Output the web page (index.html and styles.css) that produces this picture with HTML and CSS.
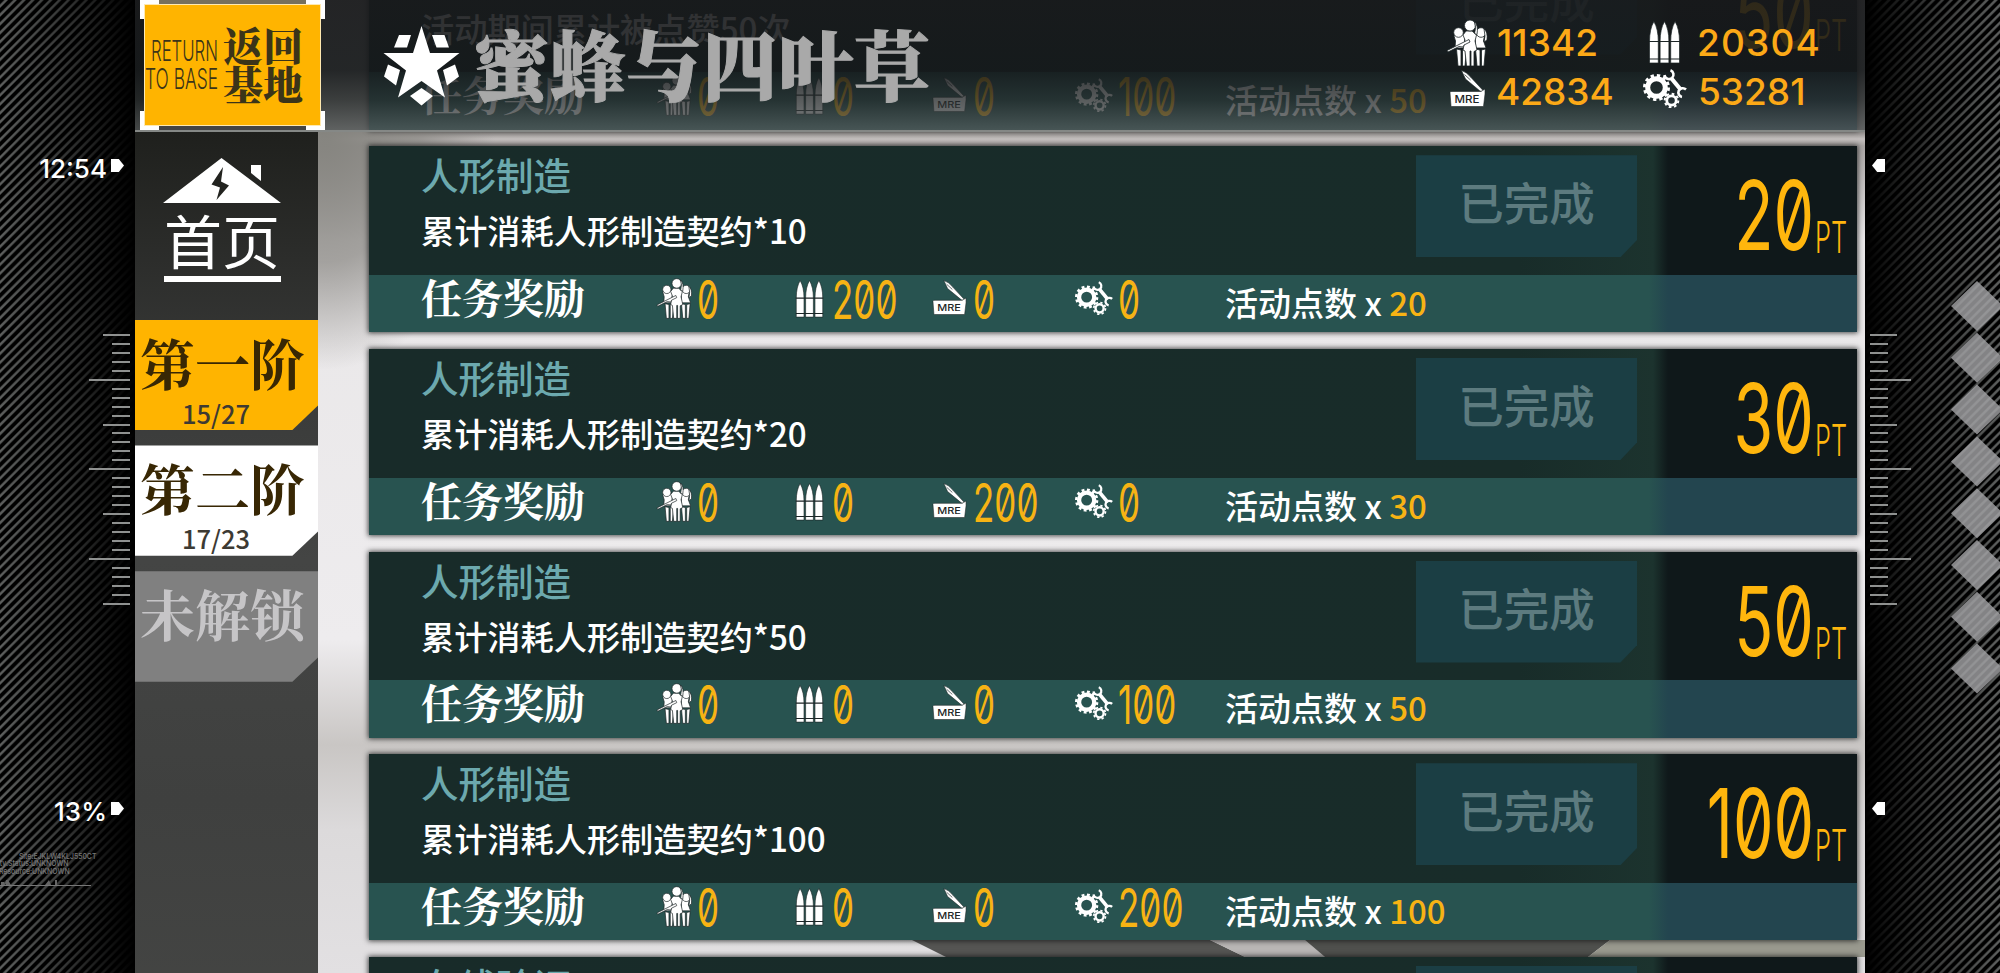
FILE: index.html
```
<!DOCTYPE html>
<html lang="zh-CN">
<head>
<meta charset="utf-8">
<title>蜜蜂与四叶草</title>
<link rel="stylesheet" href="styles.css">
</head>
<body>
<svg class="sprites" aria-hidden="true">
  <symbol id="i-doll" viewBox="0 0 44 46">
    <g fill="#fff" stroke="#1c2526" stroke-width=".8">
      <path d="M9 28h12l-2.500-7 1-6-4-2.500h-5L8 16l1.500 5z"/>
      <path d="M10.500 29l1.500 17h3V30zM16.500 30v16h2.500l1.500-17z"/>
      <circle cx="12.500" cy="12.500" r="4.800"/>
      <path d="M29 28h11l-2.500-7 1-6-4-2.500h-4L28 16l1.500 5z"/>
      <path d="M29.500 29l1.500 17h3V30zM35.500 30v16h2.500l1.500-17z"/>
      <circle cx="35" cy="12.500" r="4.800"/>
      <path d="M38 9q4 3 3 11l-3 2q2-6 0-13z"/>
      <path d="M17 30l2-10-2-5 3-4h6l4.500 4-1.500 6 2 9-3 1.500V46h-3V31h-1v15h-3.500L19 31z"/>
      <circle cx="24" cy="5.500" r="5.500"/>
      <path d="M28.500 1.500q4 4 2.500 13l-2.500-1q2-6 0-12z"/>
      <path d="M1 30.500l22-11 1 2.500-6 3-1 2-4-.5L2 32z"/>
    </g>
  </symbol>
  <symbol id="i-ammo" viewBox="0 0 31 43">
    <g fill="#fff" stroke="#1c2526" stroke-width=".7">
      <path d="M.5 42V20.500Q.5 8 4.900.5 9.300 8 9.300 20.500V42z"/>
      <path d="M11.100 42V20.500Q11.100 8 15.500.5 19.900 8 19.900 20.500V42z"/>
      <path d="M21.700 42V20.500Q21.700 8 26.100.5 30.500 8 30.500 20.500V42z"/>
    </g>
    <path d="M0 20.500h31M0 38h31" stroke="#1c2526" stroke-width="1.200"/>
  </symbol>
  <symbol id="i-mre" viewBox="0 0 37 37">
    <g fill="#fff" stroke="#1c2526" stroke-width=".6">
      <path d="M12.500.5q5 1.500 9.500 7L35.500 22l-4.500-1L16.500 9z"/>
      <path d="M1 22.500l1-1h30l4-2.500v5l-1.500 12.500h-32L2 36z"/>
    </g>
    <path d="M15.500 4.500l6 5.500" stroke="#1c2526" stroke-width=".7"/>
    <text x="5.500" y="32.700" textLength="25" lengthAdjust="spacingAndGlyphs" font-size="9.800" fill="#1c2526" class="mre">MRE</text>
  </symbol>
  <symbol id="i-part" viewBox="0 0 44 39">
    <g fill="none" stroke="#fff">
      <circle cx="13.500" cy="18.500" r="8.800" stroke-width="5"/>
      <circle cx="13.500" cy="18.500" r="12" stroke-width="3" stroke-dasharray="3.300 2.983"/>
      <circle cx="28.500" cy="31.500" r="4.700" stroke-width="2.800"/>
      <circle cx="28.500" cy="31.500" r="6.800" stroke-width="2" stroke-dasharray="2.670 2.670"/>
      <path d="M28.500 9.500L38 21" stroke-width="4.200"/>
      <path d="M21.500 6a4.600 4.600 0 0 0 7.500 3 4.600 4.600 0 0 0-1.500-7.700" stroke-width="2.600"/>
      <path d="M43 20.500a4.600 4.600 0 0 0-7.300 1.300 4.600 4.600 0 0 0 3.300 6.200" stroke-width="2.600"/>
    </g>
  </symbol>
</svg>

<div class="screen">
  <aside class="rail rail-left">
    <div class="status">12:54<i class="flag"></i></div>
    <div class="ticks"></div>
    <div class="status battery">13%<i class="flag"></i></div>
    <div class="site">
      <p>Site:EJKLW4KLJ550CT</p>
      <p class="pull-a">ity.Status:UNKNOWN</p>
      <p class="pull-b">Resource:UNKNOWN</p>
      <svg width="91" height="10" viewBox="0 0 91 10"><path d="M0 9.500h91" stroke="#777"/><path d="M1 9V6h3v3zM6 9V4h2l3 5zM45 9l4-5 2 5zM55 4h2v5h-2z" fill="#666"/></svg>
    </div>
  </aside>

  <main class="stage">
    <header class="top">
      <a class="back">
        <svg width="78" height="60" viewBox="0 0 78 60">
          <text x="6" y="23" textLength="67" lengthAdjust="spacingAndGlyphs">RETURN</text>
          <text x="0" y="51" textLength="73" lengthAdjust="spacingAndGlyphs">TO BASE</text>
        </svg>
        <span class="back-cn">返回<br>基地</span>
        <i class="c tl"></i><i class="c tr"></i><i class="c bl"></i><i class="c br"></i>
      </a>
      <svg class="star" width="78" height="82" viewBox="0 0 78 82" fill="#fff">
        <path d="M38.500 1L47 28h29.500L54 45.500l8 27-23.500-16.500-23.500 16.500 8-27L.5 28H30z"/>
        <path d="M16 10h12L24 22.500H11zM49 10h12.500L66 22.500H53.500zM5 39.500l12 5.500-4 15.500-12-9zM72 39.500L60 45l4 15.500 12-9zM38.500 63L50 71l-11.500 9.500L27 71z"/>
      </svg>
      <h1>蜜蜂与四叶草</h1>
      <div class="wallet">
        <div class="res"><svg class="w-doll"><use href="#i-doll"/></svg><b>11342</b></div>
        <div class="res"><svg class="w-ammo"><use href="#i-ammo"/></svg><b class="wide">20304</b></div>
        <div class="res"><svg class="w-mre"><use href="#i-mre"/></svg><b>42834</b></div>
        <div class="res"><svg class="w-part"><use href="#i-part"/></svg><b>53281</b></div>
      </div>
    </header>

    <nav class="side">
      <a class="home">
        <svg width="118" height="46" viewBox="0 0 118 46">
          <path fill="#fff" d="M58.500 0L118 45H0zM88 7h10v16L88 15z"/>
          <path fill="#22231f" d="M60 9L48.500 26.500l8.500 3-3.500 12.500L66 27.500l-8-4z"/>
        </svg>
        <span>首页</span>
      </a>
      <a class="tab on"><b>第一阶</b><small>15/27</small></a>
      <a class="tab"><b>第二阶</b><small>17/23</small></a>
      <a class="tab locked"><b>未解锁</b></a>
    </nav>

    <svg class="scenery" width="955" height="17" viewBox="0 0 955 17">
      <path fill="#555553" d="M2 0h298l35 17H36z"/>
      <path fill="#b9b6b5" d="M300 0h95l20 17h-80z"/>
      <path fill="#4f504d" d="M395 0h305l-22 17H415z"/>
      <path fill="#99998e" d="M700 0h255v17H678z"/>
    </svg>
    <section class="list" id="list"></section>
  </main>

  <aside class="rail rail-right">
    <div class="status"><i class="flag"></i></div>
    <div class="ticks"></div>
    <div class="status battery"><i class="flag"></i></div>
    <svg class="diamonds" width="52" height="414" viewBox="0 0 52 414">
      <path fill="#a4a4a6" fill-opacity=".8" d="M26 0l26 25-26 25L0 25zM26 51.800l26 25-26 25-26-25zM26 103.600l26 25-26 25-26-25zM26 155.400l26 25-26 25-26-25zM26 207.200l26 25-26 25-26-25zM26 259l26 25-26 25-26-25zM26 310.800l26 25-26 25-26-25zM26 362.600l26 25-26 25-26-25z"/>
    </svg>
  </aside>
</div>
<script src="app.js"></script>
</body>
</html>
```
FILE: styles.css
```
* { box-sizing: border-box; margin: 0; padding: 0; }

body {
  width: 2000px;
  height: 973px;
  overflow: hidden;
  background: #000;
  color: #fff;
  font-family: "Noto Sans CJK SC", "Noto Sans", sans-serif;
}

.sprites { position: absolute; width: 0; height: 0; }
.mre { font-family: Inter, sans-serif; font-weight: 500; }

.screen {
  display: grid;
  grid-template-columns: 135px 1730px 135px;
  height: 973px;
}

/* side rails */
.rail {
  position: relative;
  display: flex;
  flex-direction: column;
  overflow: hidden;
  font-family: Inter, sans-serif;
}
.rail-left {
  align-items: flex-end;
  padding: 153px 5px 0 0;
  background:
    linear-gradient(90deg, rgba(0,0,0,0) 0, rgba(0,0,0,.45) 50%, rgba(0,0,0,.85) 85%, #000 100%),
    repeating-linear-gradient(135deg, #000 0 2.500px, #5c5e5d 3.800px 5px, #000 6.300px);
}
.rail-right {
  padding: 153px 0 0 5px;
  background:
    linear-gradient(270deg, rgba(0,0,0,0) 0, rgba(0,0,0,.4) 50%, rgba(0,0,0,.8) 85%, #000 100%),
    repeating-linear-gradient(135deg, #000 0 2.500px, #5c5e5d 3.800px 5px, #000 6.300px);
}
.status {
  display: flex;
  height: 32px;
  gap: 4px;
  padding: 0 6px 0 2px;
  font-size: 26px;
  font-weight: 500;
  line-height: 32px;
}
.flag {
  width: 13px;
  height: 13px;
  margin-top: 6px;
  background: #fff;
  clip-path: polygon(0 0, 60% 0, 100% 50%, 60% 100%, 0 100%);
}
.rail-right .flag { transform: scaleX(-1); }
.battery { margin-top: 185px; }
.ticks {
  display: flex;
  flex-direction: column;
  height: 277px;
  margin-top: 149px;
  gap: 6.960px;
}
.rail-left .ticks { align-items: flex-end; }
.ticks i { flex: none; width: 18px; height: 2px; background: #8f9190; }
.ticks i.mid { width: 27px; }
.ticks i.long { width: 41px; }
.site {
  align-self: flex-start;
  width: 110px;
  margin-top: 25px;
  color: #777;
  font-size: 8px;
  font-weight: 500;
  line-height: 7.400px;
  white-space: nowrap;
}
.site p { padding-left: 22px; transform: scaleX(.86); transform-origin: 0 0; }
.site .pull-a { padding-left: 0; margin-left: -2px; }
.site .pull-b { padding-left: 0; margin-left: -1px; }
.site svg { display: block; margin-top: 1px; }
.diamonds { position: absolute; right: -3px; top: 281px; }

/* centre stage */
.stage {
  position: relative;
  display: grid;
  grid-template-columns: 183px 1fr;
  height: 973px;
  overflow: hidden;
  background:
    radial-gradient(ellipse 170px 240px at 190px 130px, #85847f 0, rgba(140,138,134,.75) 55%, rgba(200,198,198,0) 100%),
    linear-gradient(180deg, #8d8a88 0 132px, #c4bfbe 139px, #a9a5a4 146px, #e9e7e8 240px, #eeecee 640px, #c9c6c4 745px, #dcdadb 830px, #e2e0e2 973px);
}
.scenery { position: absolute; left: 775px; top: 940px; }
.top {
  position: absolute;
  z-index: 3;
  inset: 0 0 auto 0;
  height: 132px;
  display: flex;
  border-bottom: 2px solid #858886;
  background: linear-gradient(180deg, rgba(24,25,27,.9) 0, rgba(21,24,26,.87) 70px, rgba(36,40,41,.76) 100px, rgba(82,86,87,.74) 130px);
}
.back {
  position: relative;
  display: flex;
  width: 185px;
  height: 130px;
  margin-left: 5px;
  padding: 20px 0 0 6px;
  border: 4px solid transparent;
  border-top-color: #77705c;
  border-bottom-color: #444;
  background: #ffb400 padding-box;
  box-shadow: inset 0 0 0 1px #ffe9b0;
  color: #3b3419;
}
.back svg { margin: 14px 0 0 -5px; font: 300 29px Inter, sans-serif; fill: #3b3419; }
.back-cn { font-family: "Noto Serif CJK SC", "Noto Sans CJK SC", serif; font-size: 40px; font-weight: 900; line-height: 39px; white-space: nowrap; }
.c { position: absolute; width: 19px; height: 19px; border: 0 solid #fff; }
.tl { left: -4px; top: -4px; border-width: 4px 0 0 4px; }
.tr { right: -4px; top: -4px; border-width: 4px 4px 0 0; }
.bl { left: -4px; bottom: -4px; border-width: 0 0 4px 4px; }
.br { right: -4px; bottom: -4px; border-width: 0 4px 4px 0; }
.star { flex: none; margin: 25px 0 0 58px; }
h1 {
  flex: none;
  width: 470px;
  margin: 8px 0 0 13px;
  color: #a9a9a9;
  font-family: "Noto Serif CJK SC", "Noto Sans CJK SC", serif;
  font-size: 76px;
  font-weight: 900;
  line-height: 110px;
  white-space: nowrap;
  -webkit-text-stroke: 1px #a9a9a9;
}
.wallet {
  flex: none;
  display: grid;
  grid-template-columns: 202px 200px;
  grid-template-rows: 49px 49px;
  margin: 18px 0 0 502px;
}
.res { display: flex; align-items: center; font: 500 37px/49px Inter, sans-serif; color: #fca917; }
.res b { font-weight: 500; }
.res .wide { letter-spacing: 1.200px; }
.res svg { flex: none; }
.w-doll { width: 44px; height: 46px; margin-right: 7px; }
.w-ammo { width: 31px; height: 43px; margin: 0 17px 0 1px; }
.w-mre { width: 37px; height: 37px; margin: -6px 10px 0 3px; }
.w-part { width: 44px; height: 39px; margin: -6px 11px 0 -5px; }

/* left navigation */
.side {
  z-index: 2;
  display: flex;
  flex-direction: column;
  gap: 15.500px;
  padding-top: 132px;
  background: linear-gradient(180deg, #1f201d 132px, #2b2c2a 250px, #3a3b3a 400px, #444544 560px, #3f403f 800px, #474846);
}
.home { display: flex; flex-direction: column; align-items: center; height: 172px; padding: 26px 9px 0 0; }
.home span {
  width: 117px;
  height: 78px;
  border-bottom: 6px solid #fff;
  font-size: 58px;
  font-weight: 400;
  line-height: 70px;
  text-align: center;
  white-space: nowrap;
}
.tab {
  display: flex;
  flex-direction: column;
  height: 110.400px;
  background: #fff;
  color: #382704;
  clip-path: polygon(0 0, 100% 0, 100% 78%, 86% 100%, 0 100%);
}
.tab b {
  height: 79px;
  padding-left: 5px;
  font-family: "Noto Serif CJK SC", "Noto Sans CJK SC", serif;
  font-size: 55px;
  font-weight: 700;
  line-height: 83px;
  white-space: nowrap;
}
.tab small { padding-left: 47px; font-size: 25.500px; font-weight: 500; line-height: 27px; color: #3d3a33; }
.tab.on { background: #ffb400; }
.tab.locked { background: #808080; color: #c6c5c7; }

/* mission cards */
.list {
  display: flex;
  flex-direction: column;
  gap: 16.670px;
  margin: -56.400px 0 0 51px;
}
.card {
  position: relative;
  z-index: 1;
  flex: none;
  width: 1488px;
  height: 186px;
  box-shadow: 0 0 5px 1px rgba(20,22,22,.75);
}
.main {
  display: grid;
  grid-template-columns: 1047px 221px 1fr;
  height: 128.700px;
  background: linear-gradient(90deg, #182b29 0, #182c29 1150px, #1c332e 1284px, #0f181a 1299px);
}
.copy { padding: 0 0 0 52px; white-space: nowrap; }
.copy h2 { color: #6ca9ae; font-size: 37.500px; font-weight: 500; line-height: 55px; }
.copy p { font-size: 33.200px; font-weight: 500; line-height: 57px; }
.done {
  height: 102px;
  margin-top: 9px;
  background: #1b3e44;
  color: #5d7b7f;
  font-size: 45.500px;
  font-weight: 500;
  line-height: 93px;
  text-align: center;
  clip-path: polygon(0 0, 100% 0, 100% 83%, 92.500% 100%, 0 100%);
}
.pts {
  display: flex;
  justify-content: flex-end;
  padding-right: 10px;
  color: #ffb60d;
  font-family: Inter, sans-serif;
}
.thin { font-family: Inter, sans-serif; font-feature-settings: "zero"; white-space: nowrap; }
.pts .thin { height: 120px; font-size: 96px; line-height: 138px; transform: scaleX(.67); transform-origin: 100% 0; }
.pts svg { flex: none; margin: 74px 0 0 2px; font: 300 43px Inter, sans-serif; fill: #ffb60d; overflow: visible; }
.foot {
  display: grid;
  grid-template-columns: 235px 137px 139px 142px 151px 1fr;
  height: 57.300px;
  padding-left: 52px;
  background: linear-gradient(90deg, #285350 0 1280px, #23454f 1299px);
  white-space: nowrap;
}
.foot h3 { font-family: "Noto Serif CJK SC", "Noto Sans CJK SC", serif; font-size: 41px; font-weight: 700; line-height: 44px; }
.gain { display: flex; color: #f7b314; }
.gain .thin { font-size: 53px; line-height: 50px; transform: scaleX(.66); transform-origin: 0 0; }
.g-doll { width: 38px; height: 41px; margin: 3px 3px 0 0; }
.g-ammo { width: 31px; height: 38px; margin: 5px 7px 0 1px; }
.g-mre { width: 35px; height: 35px; margin: 5px 6px 0 0; }
.g-part { width: 38px; height: 36px; margin: 5px 5px 0 1px; }
.bonus { font-size: 33px; font-weight: 500; line-height: 55px; }
.bonus em { font-style: normal; color: #f7b314; }
```
FILE: app.js
```
const missions = [
  ["数据共享", "活动期间累计被点赞50次", [0, 0, 0, 100], 50],
  ["人形制造", "累计消耗人形制造契约*10", [0, 200, 0, 0], 20],
  ["人形制造", "累计消耗人形制造契约*20", [0, 0, 200, 0], 30],
  ["人形制造", "累计消耗人形制造契约*50", [0, 0, 0, 100], 50],
  ["人形制造", "累计消耗人形制造契约*100", [0, 0, 0, 200], 100],
  ["在线验证", "", [0, 0, 0, 0], 10]
];
const kinds = ["doll", "ammo", "mre", "part"];

document.getElementById("list").innerHTML = missions.map(([name, goal, gains, pts]) => `
  <article class="card">
    <div class="main">
      <div class="copy"><h2>${name}</h2><p>${goal}</p></div>
      <div class="done">已完成</div>
      <div class="pts"><span class="thin">${pts}</span>
        <svg width="31" height="34" viewBox="0 0 31 34"><text x="-1" y="33" textLength="32" lengthAdjust="spacingAndGlyphs">PT</text></svg></div>
    </div>
    <div class="foot">
      <h3>任务奖励</h3>
      ${gains.map((n, i) => `<div class="gain"><svg class="g-${kinds[i]}"><use href="#i-${kinds[i]}"/></svg><span class="thin">${n}</span></div>`).join("")}
      <div class="bonus">活动点数 x <em>${pts}</em></div>
    </div>
  </article>`).join("");

document.querySelectorAll(".ticks").forEach(box => {
  for (let i = 0; i <= 30; i++) {
    const tick = document.createElement("i");
    if (i % 5 === 0) tick.className = i % 10 === 0 ? "mid" : "long";
    box.append(tick);
  }
});
```
